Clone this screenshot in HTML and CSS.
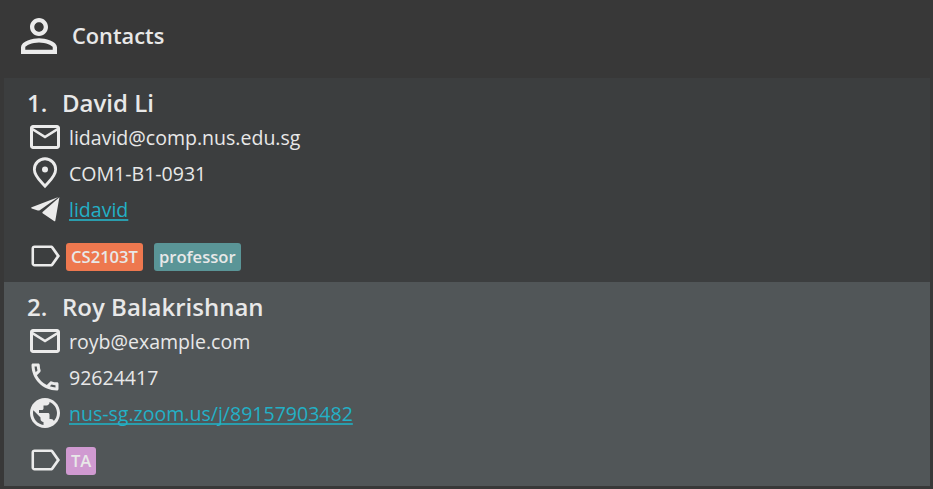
FILE: index.html
```html
<!DOCTYPE html>
<html lang="en">
<head>
<meta charset="utf-8">
<title>Contacts</title>
<link rel="stylesheet" href="styles.css">
</head>
<body>
<svg class="defs" aria-hidden="true">
  <symbol id="mail" viewBox="0 0 24 24"><path d="M22 6c0-1.100-.9-2-2-2H4c-1.100 0-2 .9-2 2v12c0 1.100.9 2 2 2h16c1.100 0 2-.9 2-2V6zm-2 0-8 5-8-5h16zm0 12H4V8l8 5 8-5v10z"/></symbol>
  <symbol id="label" viewBox="0 0 24 24"><path d="M17.630 5.840C17.270 5.330 16.670 5 16 5L5 5.010C3.900 5.010 3 5.900 3 7v10c0 1.100.9 1.990 2 1.990L16 19c.67 0 1.270-.33 1.630-.84L22 12l-4.370-6.160zM16 17.300H4.700V6.700H16L19.750 12 16 17.300z"/></symbol>
</svg>
<header class="header">
  <svg class="header-icon" viewBox="0 0 24 24"><path d="M12 5.900c1.160 0 2.100.94 2.100 2.100s-.94 2.100-2.100 2.100S9.900 9.160 9.900 8s.94-2.100 2.100-2.100m0 9c2.970 0 6.100 1.460 6.100 2.100v1.100H5.900V17c0-.64 3.130-2.100 6.100-2.100M12 4C9.790 4 8 5.790 8 8s1.790 4 4 4 4-1.790 4-4-1.790-4-4-4zm0 9c-2.670 0-8 1.340-8 4v3h16v-3c0-2.660-5.330-4-8-4z"/></svg>
  <h1 class="title">Contacts</h1>
</header>
<main class="list">
  <section class="card">
    <h2 class="name"><span class="number">1.</span>David Li</h2>
    <div class="row"><svg class="icon"><use href="#mail"/></svg><span class="text">lidavid@comp.nus.edu.sg</span></div>
    <div class="row"><svg class="icon" viewBox="0 0 24 24"><path class="outline" d="M12 20.700C10 18.200 4.900 14.300 4.900 9.600a7.100 7.100 0 0 1 14.200 0C19.100 14.300 14 18.200 12 20.700z"/><circle cx="12" cy="9.700" r="2"/></svg><span class="text">COM1-B1-0931</span></div>
    <div class="row"><svg class="icon" viewBox="0 0 24 24"><path d="M21 4 3.100 10.900q-.7.400 0 .8l4.100 1.300q.7.200 1.300-.1z"/><path d="M21.600 4.200 18.900 19.600q-.2.900-.9.400l-7.600-5.200q-.4-.4 0-.8z"/></svg><a class="link text" href="#">lidavid</a></div>
    <div class="row tags"><svg class="icon"><use href="#label"/></svg><span class="tag orange">CS2103T</span><span class="tag teal">professor</span></div>
  </section>
  <section class="card alternate">
    <h2 class="name"><span class="number">2.</span>Roy Balakrishnan</h2>
    <div class="row"><svg class="icon"><use href="#mail"/></svg><span class="text">royb@example.com</span></div>
    <div class="row"><svg class="icon" viewBox="0 0 24 24"><path d="M6.540 5c.06.89.21 1.760.45 2.590l-1.200 1.200c-.41-1.200-.67-2.470-.76-3.790h1.510m9.860 12.020c.85.24 1.720.39 2.600.45v1.490c-1.320-.09-2.590-.35-3.800-.75l1.200-1.190M7.500 3H4c-.55 0-1 .45-1 1 0 9.390 7.610 17 17 17 .55 0 1-.45 1-1v-3.490c0-.55-.45-1-1-1-1.240 0-2.450-.2-3.570-.57a.84.84 0 0 0-.31-.05c-.26 0-.51.1-.71.29l-2.200 2.200a15.150 15.150 0 0 1-6.590-6.590l2.200-2.200c.28-.28.36-.67.25-1.020A11.360 11.360 0 0 1 8.500 4c0-.55-.45-1-1-1z"/></svg><span class="text">92624417</span></div>
    <div class="row"><svg class="icon" viewBox="0 0 24 24"><path d="M12 2C6.480 2 2 6.480 2 12s4.480 10 10 10 10-4.480 10-10S17.520 2 12 2zm-1 17.930c-3.950-.49-7-3.850-7-7.930 0-.62.08-1.210.21-1.790L9 15v1c0 1.100.9 2 2 2v1.930zm6.900-2.540c-.26-.81-1-1.390-1.900-1.390h-1v-3c0-.55-.45-1-1-1H8v-2h2c.55 0 1-.45 1-1V7h2c1.100 0 2-.9 2-2v-.41c2.930 1.190 5 4.060 5 7.410 0 2.080-.8 3.970-2.100 5.390z"/></svg><a class="link text" href="#">nus-sg.zoom.us/j/89157903482</a></div>
    <div class="row tags"><svg class="icon"><use href="#label"/></svg><span class="tag pink">TA</span></div>
  </section>
</main>
</body>
</html>
```
FILE: styles.css
```css
* { box-sizing: border-box; }
body {
  margin: 0;
  height: 489px;
  overflow: hidden;
  background: #383838;
  color: #e8e8e8;
  font-family: "Open Sans", sans-serif;
}
.defs { display: none; }
svg { fill: #ebebeb; flex: none; }
.header { display: flex; align-items: center; height: 78px; padding: 0 12px 6px; }
.header-icon { width: 54px; height: 54px; }
.title { margin: 0 0 0 6px; font-size: 21.8px; line-height: 30px; font-weight: 600; }
.list { margin: 0 3px 0 4px; }
.card { height: 204px; padding: 8px 23px 0; background: #3c3e3f; }
.alternate { background: #515658; }
.name { display: flex; margin: 0; height: 33px; line-height: 34px; font-size: 24px; font-weight: 600; }
.number { width: 35px; }
.row { display: flex; align-items: center; height: 36px; font-size: 19.55px; line-height: 28px; white-space: nowrap; }
.icon { width: 36px; height: 36px; margin-right: 6px; }
.text { padding-top: 2px; }
.outline { fill: none; stroke: #ebebeb; stroke-width: 1.9; }
.link { color: #23b0c6; text-decoration-color: #2a9dad; text-decoration-thickness: 2px; text-underline-offset: 2px; text-decoration-skip-ink: none; }
.tags { margin-top: 11px; }
.tags .icon { margin-right: 3px; }
.tag { height: 28px; margin: 2px 11px 0 0; padding: 0 5px; border-radius: 3px; font-size: 16.6px; line-height: 28px; font-weight: 600; }
.orange { background: #ee784f; }
.teal { background: #5a9597; }
.pink { background: #d09ad1; }
```
